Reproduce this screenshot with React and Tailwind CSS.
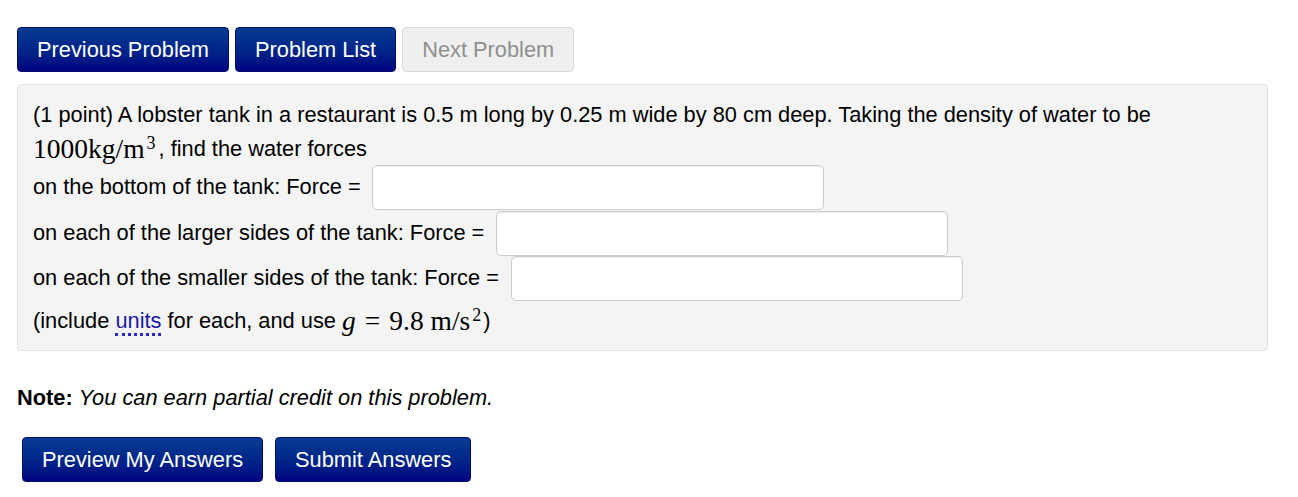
const sans = { fontFamily: '"Liberation Sans", Arial, sans-serif' };

function NavButton({ children, disabled }) {
  if (disabled) {
    return (
      <button className="h-[45px] px-[19px] pt-[1px] rounded-[4px] border border-[#d9d9d9] bg-[#efefef] text-[21.8px] text-[#8f8f8f]">
        {children}
      </button>
    );
  }
  return (
    <button className="h-[45px] px-[19px] pt-[1px] rounded-[4px] border border-[#00106a] bg-linear-to-b from-[#0a3c93] to-[#000080] text-[21.8px] text-white">
      {children}
    </button>
  );
}

function AnswerBox({ className = '' }) {
  return (
    <input
      type="text"
      className={`h-[45px] w-[452px] rounded-[5px] border border-[#cccccc] bg-white shadow-[inset_0_1px_1px_rgba(0,0,0,0.075)] ${className}`}
    />
  );
}

function Math({ children, className = '' }) {
  return (
    <span className={`text-[27.5px] ${className}`} style={{ fontFamily: '"Liberation Serif", "DejaVu Serif", serif' }}>
      {children}
    </span>
  );
}

export default function App() {
  return (
    <div className="min-h-[497px] bg-white pt-[27px] px-[17px] text-black" style={sans}>
      <div className="flex gap-[6px]">
        <NavButton>Previous Problem</NavButton>
        <NavButton>Problem List</NavButton>
        <NavButton disabled>Next Problem</NavButton>
      </div>

      <div className="mt-[12px] w-[1251px] rounded-[4px] border border-[#e3e3e3] bg-[#f4f4f4] pt-[18px] pb-[9px] pl-[15px] text-[21.8px]">
        <div className="h-[24px] leading-[24px] whitespace-nowrap">
          (1 point) A lobster tank in a restaurant is 0.5 m long by 0.25 m wide by 80 cm deep. Taking the density of water to be
        </div>
        <div className="mt-[6px] h-[32px] flex items-center">
          <Math>
            1000kg/m<sup className="text-[18px] ml-[2px]">3</sup>
          </Math>
          <span className="ml-[3px]">, find the water forces</span>
        </div>
        <div className="h-[46px] flex items-start">
          <span className="leading-[44px]">on the bottom of the tank: Force =</span>
          <AnswerBox className="ml-[11px]" />
        </div>
        <div className="h-[45px] flex items-start">
          <span className="leading-[44px]">on each of the larger sides of the tank: Force =</span>
          <AnswerBox className="ml-[12px]" />
        </div>
        <div className="h-[45px] flex items-start">
          <span className="leading-[44px]">on each of the smaller sides of the tank: Force =</span>
          <AnswerBox className="ml-[12px]" />
        </div>
        <div className="h-[40px] flex items-center">
          <span className="whitespace-pre">
            (include <span className="text-[#1a1aa6] border-b-[3px] border-dotted border-[#2a2ad0]">units</span> for each, and use{' '}
          </span>
          <Math>
            <span className="italic">g</span>
            <span className="mx-[9px]">=</span>
            9.8 m/s<sup className="text-[18px] ml-[2px]">2</sup>
          </Math>
          <span className="ml-[2px]">)</span>
        </div>
      </div>

      <div className="mt-[35px] h-[24px] leading-[24px] text-[21.8px]">
        <b>Note:</b> <i>You can earn partial credit on this problem.</i>
      </div>

      <div className="mt-[27px] ml-[5px] flex gap-[12px]">
        <NavButton>Preview My Answers</NavButton>
        <NavButton>Submit Answers</NavButton>
      </div>
    </div>
  );
}
